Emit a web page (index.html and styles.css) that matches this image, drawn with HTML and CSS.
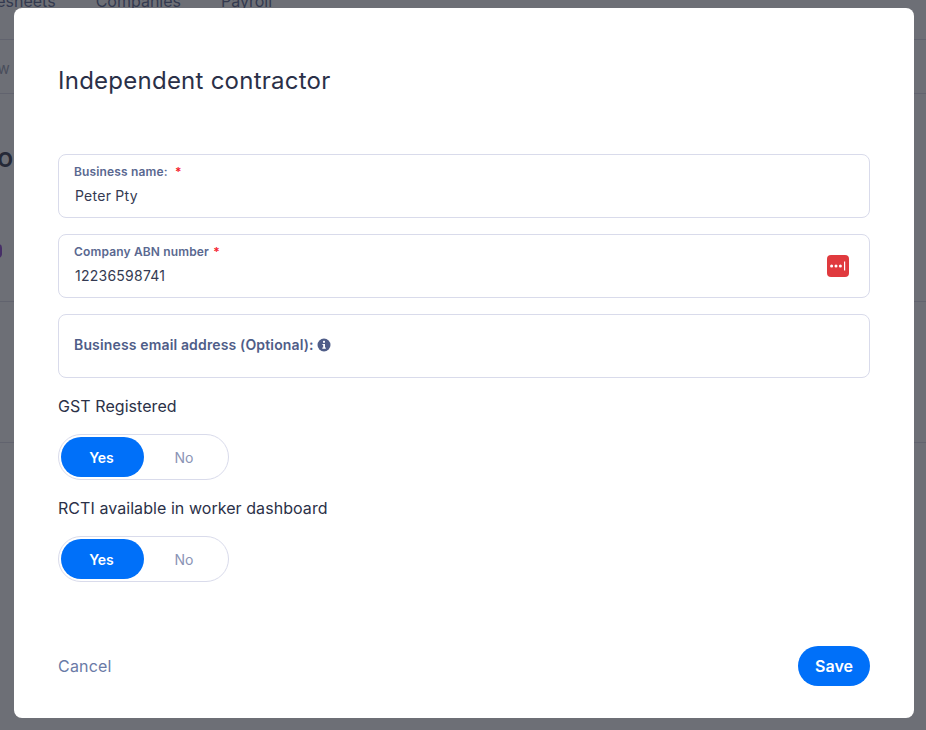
FILE: index.html
```html
<!DOCTYPE html>
<html lang="en">
<head>
<meta charset="utf-8">
<title>Independent contractor</title>
<link rel="stylesheet" href="styles.css">
</head>
<body>
<div class="page">
  <nav class="nav">
    <span class="nav-item nav-first">Timesheets</span>
    <span class="nav-item">Companies</span>
    <span class="nav-item">Payroll</span>
  </nav>
  <div class="subnav"><span class="subnav-text">View</span></div>
  <div class="section section-a">
    <div class="page-title">INFO</div>
    <div class="badge"></div>
  </div>
  <div class="section section-b"></div>
</div>
<div class="backdrop"></div>
<main class="modal">
  <h1 class="title">Independent contractor</h1>
  <form class="form">
    <div class="field">
      <div class="label">Business name: <span class="req req-gap">*</span></div>
      <div class="value">Peter Pty</div>
    </div>
    <div class="field field-icon">
      <div class="field-text">
        <div class="label">Company ABN number <span class="req">*</span></div>
        <div class="value">12236598741</div>
      </div>
      <svg class="lastpass" viewBox="0 0 22 22" width="22" height="22" aria-hidden="true">
        <rect x="0" y="0" width="22" height="22" rx="4" fill="#e03a3e"/>
        <circle cx="4.6" cy="11" r="1.5" fill="#fff"/>
        <circle cx="9" cy="11" r="1.5" fill="#fff"/>
        <circle cx="13.4" cy="11" r="1.5" fill="#fff"/>
        <rect x="17" y="6.5" width="1.2" height="9" fill="#fff"/>
      </svg>
    </div>
    <div class="field field-empty">
      <span class="label label-large">Business email address (Optional):</span>
      <svg class="info" viewBox="0 0 14 14" width="14" height="14" aria-hidden="true">
        <circle cx="7" cy="7" r="6.5" fill="#4f5d88"/>
        <rect x="6" y="2.8" width="2" height="2" rx="0.6" fill="#fff"/>
        <path d="M5.4 6h2.6v3.6h.8v1.1H5.3V9.6h.9V7.1h-.8z" fill="#fff"/>
      </svg>
    </div>
    <div class="group-label">GST Registered</div>
    <div class="toggle">
      <span class="opt opt-on">Yes</span>
      <span class="opt">No</span>
    </div>
    <div class="group-label">RCTI available in worker dashboard</div>
    <div class="toggle">
      <span class="opt opt-on">Yes</span>
      <span class="opt">No</span>
    </div>
  </form>
  <div class="actions">
    <span class="cancel">Cancel</span>
    <span class="save">Save</span>
  </div>
</main>
</body>
</html>
```

FILE: styles.css
```css
* { box-sizing: border-box; }
html, body { margin: 0; padding: 0; height: 100%; }
body {
  font-family: Inter, "Liberation Sans", sans-serif;
  background: #fff;
  overflow: hidden;
  position: relative;
  color: #252b42;
}
.page { height: 730px; overflow: hidden; }
.nav {
  height: 49px;
  display: flex;
  align-items: flex-start;
  gap: 40px;
  margin-top: -9px;
  border-bottom: 1px solid #d9dbe6;
  font-size: 16px;
  color: #4f5d88;
}
.nav-first { margin-left: -32px; }
.nav-item { line-height: 20px; }
.subnav {
  height: 54px;
  border-bottom: 1px solid #d9dbe6;
  font-size: 15px;
  color: #9299ad;
  line-height: 57px;
  margin-left: -25px;
}
.section-a {
  height: 208px;
  border-bottom: 1px solid #d9dbe6;
  padding-top: 52px;
}
.page-title {
  font-size: 20px;
  font-weight: 700;
  line-height: 28px;
  margin-left: -35px;
}
.badge {
  width: 22px;
  height: 14px;
  margin: 70px 0 0 -20px;
  border: 2px solid #8a3fd1;
  border-radius: 4px;
}
.section-b { height: 141px; border-bottom: 1px solid #d9dbe6; }
.backdrop {
  position: absolute;
  inset: 0;
  background: rgba(38, 40, 50, 0.67);
}
.modal {
  position: absolute;
  left: 14px;
  top: 8px;
  width: 900px;
  height: 710px;
  background: #fff;
  border-radius: 8px;
  padding: 0 44px;
  display: flex;
  flex-direction: column;
}
.title {
  margin: 55px 0 0;
  font-size: 24px;
  line-height: 36px;
  font-weight: 400;
  color: #2a3048;
  letter-spacing: 0.25px;
}
.form { margin-top: 55px; display: flex; flex-direction: column; }
.field {
  height: 64px;
  border: 1px solid #d9dbeb;
  border-radius: 8px;
  padding: 8px 15px 0;
  margin-bottom: 16px;
}
.field-icon {
  display: flex;
  justify-content: space-between;
  align-items: flex-start;
  padding-right: 20px;
}
.lastpass { margin-top: 12px; }
.field-empty {
  display: flex;
  align-items: center;
  gap: 3px;
  padding: 0 15px 2px;
  margin-bottom: 0;
}
.label {
  font-size: 12px;
  line-height: 18px;
  font-weight: 600;
  color: #5a6890;
  letter-spacing: 0.15px;
}
.label-large { font-size: 14px; line-height: 20px; color: #4f5d88; }
.req { color: #f5222d; margin-left: 1px; }
.req-gap { margin-left: 4px; }
.value {
  font-size: 14px;
  line-height: 20px;
  margin-top: 5px;
  padding-left: 1px;
  color: #343a52;
  letter-spacing: 0.25px;
}
.group-label {
  font-size: 16px;
  line-height: 24px;
  margin-top: 16px;
  color: #2b3148;
  letter-spacing: 0.06px;
}
.toggle {
  width: 171px;
  height: 46px;
  margin-top: 16px;
  border: 1px solid #d9dbeb;
  border-radius: 23px;
  padding: 2px;
  display: flex;
  align-items: stretch;
}
.opt {
  flex: 1;
  display: flex;
  align-items: center;
  justify-content: center;
  padding-right: 2px;
  font-size: 14px;
  color: #8a94b5;
  border-radius: 20px;
}
.opt-on { flex: 0 0 83px; background: #0070f9; color: #fff; font-weight: 600; }
.actions {
  margin-top: auto;
  margin-bottom: 32px;
  display: flex;
  justify-content: space-between;
  align-items: center;
}
.cancel { font-size: 16px; color: #6a7aa6; letter-spacing: 0.2px; }
.save {
  width: 72px;
  height: 40px;
  border-radius: 20px;
  background: #0070f9;
  color: #fff;
  font-size: 16px;
  font-weight: 600;
  display: flex;
  align-items: center;
  justify-content: center;
}
```
